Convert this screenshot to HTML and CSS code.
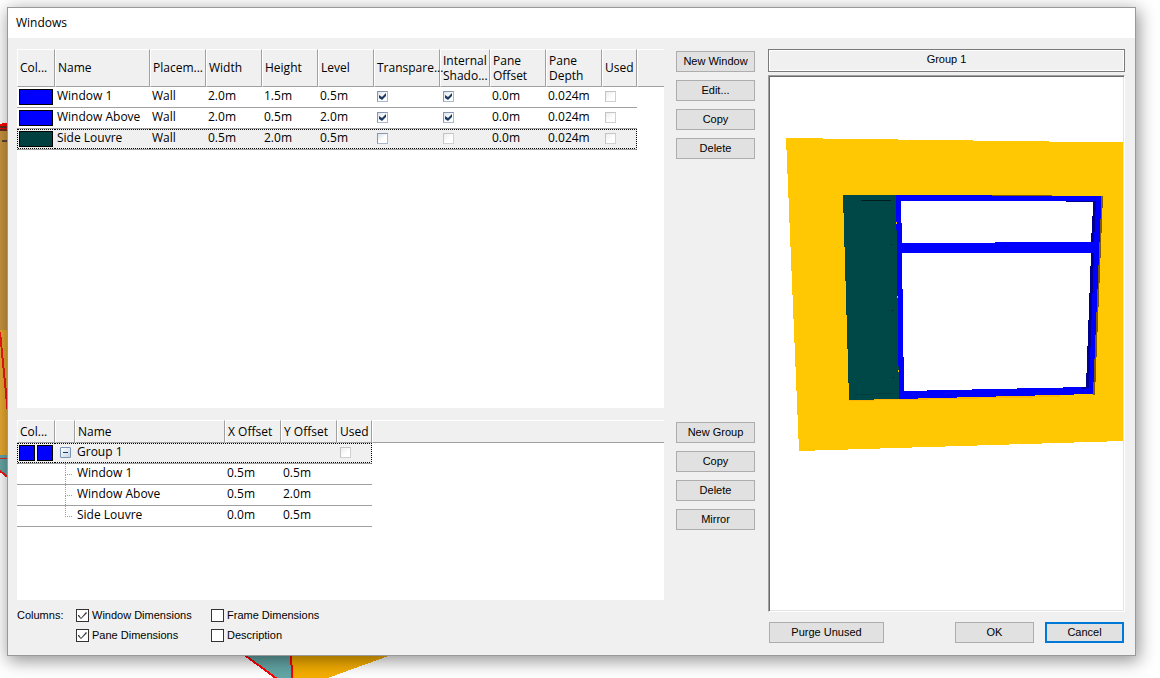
FILE: index.html
```html
<!DOCTYPE html>
<html lang="en">
<head>
<meta charset="utf-8">
<title>Windows</title>
<link rel="stylesheet" href="styles.css">
</head>
<body>
<svg class="scene" width="400" height="678" viewBox="0 0 400 678" shape-rendering="crispEdges" aria-hidden="true">
  <path fill="#e8a930" d="M0 125H20V456H0z"/>
  <path fill="#c9943f" d="M0 125H20V330H0z"/>
  <path fill="#6a2c20" d="M0 124H20V131H0z"/>
  <path fill="#ff0000" d="M0 124l3-1h17v3H0zM0 128h20v1H0z"/>
  <path fill="#5b4436" d="M2 140h18v2H2z"/>
  <path fill="#67a5a6" d="M0 455H20V486L0 470z"/>
  <path fill="none" stroke="#f01818" stroke-width="2" d="M0 332L9 424M0 471L9 478"/>
  <path fill="none" stroke="#e02828" d="M0 458.500H20"/>
  <path fill="#64a6a6" d="M238 650L277 679H291V650z"/>
  <path fill="#f5ae00" d="M292 650H405L325 679H292z"/>
  <path fill="none" stroke="#ff0000" stroke-width="2" d="M238 650L277 679M291 650L292 679"/>
</svg>

<main class="dialog">
  <h1 class="title">Windows</h1>
  <div class="content">
    <section class="list">
      <table class="grid grid-windows">
        <colgroup>
          <col class="w38"><col class="w95"><col class="w56"><col class="w56"><col class="w56"><col class="w56"><col class="w66"><col class="w50"><col class="w56"><col class="w56"><col class="w35"><col>
        </colgroup>
        <thead>
          <tr><th>Col...</th><th>Name</th><th>Placem...</th><th>Width</th><th>Height</th><th>Level</th><th>Transpare...</th><th>Internal<br>Shado...</th><th>Pane<br>Offset</th><th>Pane<br>Depth</th><th>Used</th><th class="rest"></th></tr>
        </thead>
        <tbody>
          <tr><td><span class="swatch blue"></span></td><td>Window 1</td><td>Wall</td><td>2.0m</td><td>1.5m</td><td>0.5m</td><td><input class="tick" type="checkbox" aria-label="Transparent" checked></td><td><input class="tick" type="checkbox" aria-label="Internal shadow" checked></td><td>0.0m</td><td>0.024m</td><td><input class="tick" type="checkbox" aria-label="Used" disabled></td></tr>
          <tr><td><span class="swatch blue"></span></td><td>Window Above</td><td>Wall</td><td>2.0m</td><td>0.5m</td><td>2.0m</td><td><input class="tick" type="checkbox" aria-label="Transparent" checked></td><td><input class="tick" type="checkbox" aria-label="Internal shadow" checked></td><td>0.0m</td><td>0.024m</td><td><input class="tick" type="checkbox" aria-label="Used" disabled></td></tr>
          <tr class="selected"><td><span class="swatch green"></span></td><td>Side Louvre</td><td>Wall</td><td>0.5m</td><td>2.0m</td><td>0.5m</td><td><input class="tick" type="checkbox" aria-label="Transparent"></td><td><input class="tick" type="checkbox" aria-label="Internal shadow" disabled></td><td>0.0m</td><td>0.024m</td><td><input class="tick" type="checkbox" aria-label="Used" disabled></td></tr>
        </tbody>
      </table>
    </section>
    <div class="actions">
      <button class="btn" type="button">New Window</button>
      <button class="btn" type="button">Edit...</button>
      <button class="btn" type="button">Copy</button>
      <button class="btn" type="button">Delete</button>
    </div>

    <section class="list lower">
      <table class="grid grid-groups">
        <colgroup>
          <col class="w38"><col class="w20"><col class="w150"><col class="w56"><col class="w56"><col class="w35"><col>
        </colgroup>
        <thead>
          <tr><th>Col...</th><th></th><th>Name</th><th>X Offset</th><th>Y Offset</th><th>Used</th><th class="rest"></th></tr>
        </thead>
        <tbody>
          <tr class="selected"><td><span class="pair"><span class="swatch blue"></span><span class="swatch blue"></span></span></td><td><button class="expander" type="button" aria-label="Collapse Group 1"></button></td><td>Group 1</td><td></td><td></td><td><input class="tick" type="checkbox" aria-label="Used" disabled></td></tr>
          <tr><td></td><td class="branch"></td><td>Window 1</td><td>0.5m</td><td>0.5m</td><td></td></tr>
          <tr><td></td><td class="branch"></td><td>Window Above</td><td>0.5m</td><td>2.0m</td><td></td></tr>
          <tr><td></td><td class="branch last"></td><td>Side Louvre</td><td>0.0m</td><td>0.5m</td><td></td></tr>
        </tbody>
      </table>
    </section>
    <div class="actions lower">
      <button class="btn" type="button">New Group</button>
      <button class="btn" type="button">Copy</button>
      <button class="btn" type="button">Delete</button>
      <button class="btn" type="button">Mirror</button>
    </div>

    <div class="columns">
      <span class="caption">Columns:</span>
      <div class="options">
        <label class="option"><input class="box" type="checkbox" checked>Window Dimensions</label>
        <label class="option"><input class="box" type="checkbox">Frame Dimensions</label>
        <label class="option"><input class="box" type="checkbox" checked>Pane Dimensions</label>
        <label class="option"><input class="box" type="checkbox">Description</label>
      </div>
    </div>

    <section class="preview">
      <h2 class="preview-title">Group 1</h2>
      <div class="view">
        <svg class="drawing" viewBox="770 77 353 532" preserveAspectRatio="xMidYMin meet" shape-rendering="crispEdges" role="img" aria-label="Window group on a wall">
          <path fill="#ffc803" d="M786 138L1123 142.500V441L799 451z"/>
          <path fill="#ffb400" d="M849 400L1060 395V397L849 401z"/>
          <path fill="#805c00" d="M992 195H1052V196H992zM1101 196H1103L1095 395H1093z"/>
          <path fill="#004848" d="M843 195H897L899 399L849 400z"/>
          <path fill="#001c1c" d="M861 200H891V201H861zM891 244h1v1h-1zM892 310h1v1h-1zM893 377h1v1h-1z"/>
          <path fill="#003c3c" d="M855 394h19v1h-19zM876 393h17v1h-17z"/>
          <path fill="#0000ff" d="M896 195H992V196H1101.500L1093 394L899 399z"/>
          <path fill="#00008c" d="M1066 201H1096L1094 242H1090zM1091 253H1094L1089 388L1081 389z"/>
          <path fill="#fff" d="M901 201H1066V202H1093V208L1091 242H995V243H902zM902 253H1091L1086 387L904 391z"/>
          <path fill="#ffc803" d="M896 222h1v2h-1zM897 296h1v2h-1zM898 370h1v2h-1z"/>
        </svg>
      </div>
      <div class="footer">
        <button class="btn purge" type="button">Purge Unused</button>
        <button class="btn" type="button">OK</button>
        <button class="btn default" type="button">Cancel</button>
      </div>
    </section>
  </div>
</main>
</body>
</html>
```
FILE: styles.css
```css
*,
*::before,
*::after {
  box-sizing: border-box;
}

body {
  margin: 0;
  min-height: 100vh;
  padding: 7px 24px 22px 7px;
  display: flex;
  background: #fff;
  color: #000;
  font: 11px/13px "Liberation Sans", Arial, sans-serif;
}

.scene {
  position: absolute;
  left: 0;
  top: 0;
}

.dialog {
  position: relative;
  flex: 1;
  min-width: 0;
  display: flex;
  flex-direction: column;
  border: 1px solid #999;
  background: #f0f0f0;
  box-shadow: 2px 4px 16px 1px rgba(0, 0, 0, 0.42);
}

.title {
  margin: 0;
  padding: 0 8px;
  background: #fff;
  font: 12px/30px "Open Sans", "Noto Sans", sans-serif;
}

.content {
  flex: 1;
  padding: 11px 10px 12px 9px;
  display: grid;
  grid-template-columns: minmax(0, 647fr) 80px minmax(0, 357fr);
  grid-template-rows: 359fr 12px 180fr auto;
  column-gap: 12px;
}

.list {
  grid-column: 1;
  background: #fff;
  overflow: hidden;
}

.actions {
  grid-column: 2;
  padding-top: 2px;
  display: flex;
  flex-direction: column;
  align-items: flex-start;
  gap: 8px;
}

.lower {
  grid-row: 3;
}

.btn {
  flex-shrink: 0;
  width: 79px;
  height: 21px;
  padding: 0;
  border: 1px solid #adadad;
  border-radius: 0;
  background: #e1e1e1;
  color: #000;
  font: inherit;
}

.btn.default {
  border: 2px solid #0078d7;
}

.btn.purge {
  width: 115px;
  margin-right: auto;
}

/* Data grids */

.grid {
  width: 100%;
  table-layout: fixed;
  border-collapse: separate;
  border-spacing: 0;
  font: 12px/15px "Open Sans", "Noto Sans", sans-serif;
}

.w20 { width: 20px; }
.w35 { width: 35px; }
.w38 { width: 38px; }
.w50 { width: 50px; }
.w56 { width: 56px; }
.w66 { width: 66px; }
.w95 { width: 95px; }
.w150 { width: 150px; }

.grid th {
  padding: 0 0 1px 2px;
  border: 1px solid #a0a0a0;
  border-top-color: #fff;
  border-left-color: #fff;
  background: #f0f0f0;
  font-weight: normal;
  text-align: left;
  white-space: nowrap;
}

.grid th.rest {
  border-right: 0;
}

.grid-windows th {
  height: 38px;
}

.grid-groups th {
  height: 23px;
}

.grid td {
  height: 21px;
  padding: 1px 2px 0;
  border-bottom: 1px solid #a0a0a0;
  line-height: 15px;
  vertical-align: top;
  white-space: nowrap;
}

.selected td {
  background:
    repeating-linear-gradient(90deg, #000 0 1px, transparent 1px 2px) 0 0 / 100% 1px no-repeat,
    repeating-linear-gradient(90deg, #000 0 1px, transparent 1px 2px) 0 100% / 100% 1px no-repeat,
    #f0f0f0;
  background-origin: padding-box;
}

.selected td:first-child {
  border-left: 1px dotted #000;
  padding-left: 1px;
}

.selected td:last-child {
  border-right: 1px dotted #000;
}

.swatch {
  display: block;
  width: 34px;
  height: 16px;
  margin-top: 1px;
  border: 1px solid #000;
}

.pair {
  display: flex;
  gap: 2px;
}

.pair .swatch {
  width: 16px;
}

.blue { background: #00f; }
.green { background: #004040; }

.tick {
  appearance: none;
  display: block;
  width: 11px;
  height: 11px;
  margin: 3px 0 0 1px;
  border: 1px solid #8796b0;
  border-right-color: #a9b8cf;
  border-bottom-color: #a9b8cf;
  background: linear-gradient(135deg, #dde3ea, #fff 60%);
}

.tick:disabled {
  border-color: #c4c4c4 #d0d0d0 #d0d0d0 #c4c4c4;
  background: linear-gradient(135deg, #ececec, #fff 60%);
}

.tick:checked::before {
  content: "";
  display: block;
  width: 9px;
  height: 9px;
  background: #1c3a66;
  clip-path: polygon(1px 3px, 4px 5px, 8px 1px, 8px 4px, 4px 8px, 1px 6px);
}

.expander {
  display: flex;
  align-items: center;
  justify-content: center;
  width: 11px;
  height: 11px;
  margin: 3px 0 0 3px;
  padding: 0;
  border: 1px solid #7a95b8;
  border-radius: 1px;
  background: linear-gradient(135deg, #fff, #c8d4e4);
}

.expander::before {
  content: "";
  width: 5px;
  height: 1px;
  background: #1c3a66;
}

.grid .branch {
  padding: 0 2px 0 10px;
}

.branch::before {
  content: "";
  display: block;
  width: 7px;
  height: 11px;
  border-left: 1px dotted #a0a0a0;
  border-bottom: 1px dotted #a0a0a0;
}

.branch::after {
  content: "";
  display: block;
  height: 9px;
  border-left: 1px dotted #a0a0a0;
}

.branch.last::after {
  border-left: 0;
}

/* Column options */

.columns {
  grid-column: 1;
  grid-row: 4;
  padding: 9px 0 1px;
  display: flex;
}

.caption {
  width: 59px;
}

.options {
  display: grid;
  grid-template-columns: 135px auto;
  row-gap: 7px;
}

.option {
  display: flex;
  align-items: center;
  gap: 3px;
  white-space: nowrap;
}

.box {
  appearance: none;
  width: 13px;
  height: 13px;
  margin: 0;
  border: 1px solid #333;
  background: #fff;
}

.box:checked::before {
  content: "";
  display: block;
  width: 11px;
  height: 11px;
  background: #333;
  clip-path: polygon(1px 5px, 2px 5px, 4px 8px, 9px 2px, 10px 3px, 4px 9px, 1px 6px);
}

/* Preview */

.preview {
  grid-column: 3;
  grid-row: 1 / -1;
  display: flex;
  flex-direction: column;
}

.preview-title {
  height: 23px;
  margin: 0 0 3px;
  border: 1px solid #7a7a7a;
  box-shadow: inset 0 0 0 1px #fff;
  font: 11px/18px "Liberation Sans", Arial, sans-serif;
  text-align: center;
}

.view {
  flex: 1;
  min-height: 0;
  display: flex;
  margin-bottom: 10px;
  border: 1px solid #fff;
  border-top-color: #a0a0a0;
  border-left-color: #a0a0a0;
  background: #fff;
  box-shadow: inset 1px 1px 0 #696969, inset -1px -1px 0 #e3e3e3;
  padding: 1px;
}

.drawing {
  flex: 1;
  min-width: 0;
}

.footer {
  display: flex;
  gap: 11px;
  padding: 0 1px;
}
```
